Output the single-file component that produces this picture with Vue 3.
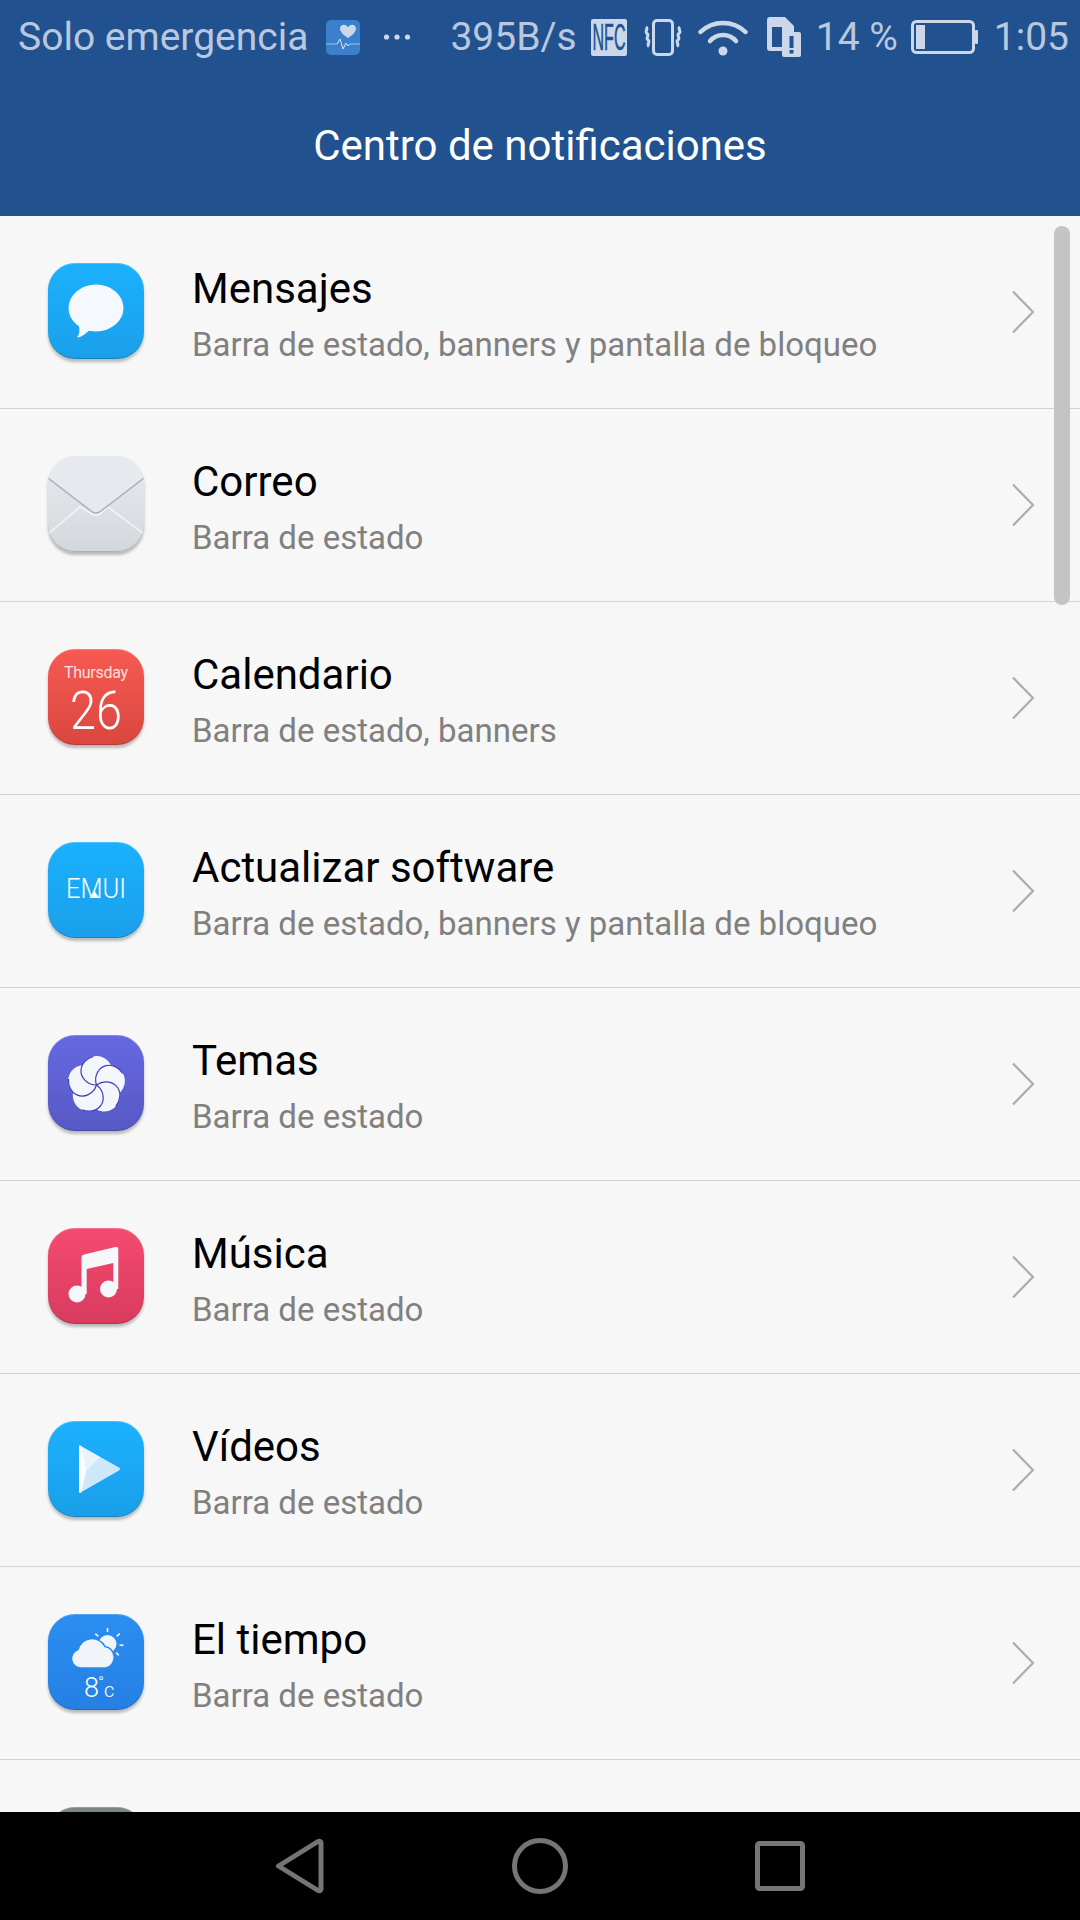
<script setup>
const rows = [
  { key: 'msg', title: 'Mensajes', sub: 'Barra de estado, banners y pantalla de bloqueo' },
  { key: 'mail', title: 'Correo', sub: 'Barra de estado' },
  { key: 'cal', title: 'Calendario', sub: 'Barra de estado, banners' },
  { key: 'emui', title: 'Actualizar software', sub: 'Barra de estado, banners y pantalla de bloqueo' },
  { key: 'theme', title: 'Temas', sub: 'Barra de estado' },
  { key: 'music', title: 'Música', sub: 'Barra de estado' },
  { key: 'video', title: 'Vídeos', sub: 'Barra de estado' },
  { key: 'weather', title: 'El tiempo', sub: 'Barra de estado' },
  { key: 'more', title: '', sub: '' },
]
const angles = [0, 72, 144, 216, 288]
const rays = [-50, 0, 50, 95, 135]
</script>

<template>
  <div class="screen">
    <header class="header">
      <div class="status">
        <span class="st st-carrier">Solo emergencia</span>
        <svg class="s-health" viewBox="0 0 34 35">
          <rect width="34" height="35" rx="5" fill="#3a80cd" />
          <path d="M0 24h11M24 24h10" stroke="#9cbfe4" stroke-width="1.2" />
          <path d="M11 24l3 -5l3 10l3 -6l2 3l2 -2" fill="none" stroke="#dbe5f2" stroke-width="1" />
          <path d="M22 18c-5 -3.500 -8 -6 -8 -9.500c0 -2.500 2 -3.800 3.800 -3.800c1.800 0 3.200 1 4.200 2.500c1 -1.500 2.400 -2.500 4.200 -2.500c1.800 0 3.800 1.300 3.800 3.800c0 3.500 -3 6 -8 9.500z" fill="#ccd8e9" />
        </svg>
        <svg class="s-dots" viewBox="0 0 28 8">
          <circle cx="3.500" cy="4" r="2.600" /><circle cx="14" cy="4" r="2.600" /><circle cx="24.500" cy="4" r="2.600" />
        </svg>
        <span class="st st-speed">395B/s</span>
        <svg class="s-nfc" viewBox="0 0 36 37">
          <rect width="36" height="37" rx="2" fill="#ccd8e9" />
          <text x="18" y="31" text-anchor="middle" textLength="33" lengthAdjust="spacingAndGlyphs" class="nfc-text">NFC</text>
        </svg>
        <svg class="s-vib" viewBox="0 0 40 37">
          <rect x="10.500" y="1.500" width="19" height="34" rx="3.500" fill="none" stroke="#ccd8e9" stroke-width="3" />
          <path d="M3 8c3 2.500 -2 4 1 6.500c3 2.500 -2 4 1 6.500c3 2.500 -2 4 1 6.500M37 8c-3 2.500 2 4 -1 6.500c-3 2.500 2 4 -1 6.500c-3 2.500 2 4 -1 6.500" fill="none" stroke="#ccd8e9" stroke-width="3" />
        </svg>
        <svg class="s-wifi" viewBox="0 0 50 37">
          <path d="M2.500 13C15 1 35 1 47.500 13" fill="none" stroke="#ccd8e9" stroke-width="4.500" stroke-linecap="round" />
          <path d="M12 22C19 14 31 14 38 22" fill="none" stroke="#ccd8e9" stroke-width="4.500" stroke-linecap="round" />
          <circle cx="25" cy="32" r="4.500" fill="#ccd8e9" />
        </svg>
        <svg class="s-sim" viewBox="0 0 34 40">
          <path d="M3 0h15l9 9v8h-12v17h-12a3 3 0 0 1 -3 -3v-28a3 3 0 0 1 3 -3z" fill="#ccd8e9" />
          <rect x="5" y="10" width="10" height="20" fill="#21528f" />
          <rect x="15" y="15" width="19" height="25" rx="2" fill="#ccd8e9" />
          <rect x="22.500" y="19" width="4" height="12" fill="#21528f" />
          <rect x="22.500" y="33" width="4" height="3.500" fill="#21528f" />
        </svg>
        <span class="st st-batt">14 %</span>
        <svg class="s-batt" viewBox="0 0 67 34">
          <rect x="1.500" y="1.500" width="61" height="31" rx="4" fill="none" stroke="#ccd8e9" stroke-width="3" />
          <rect x="5" y="5" width="9" height="24" fill="#ccd8e9" />
          <rect x="64" y="10" width="3" height="14" rx="1" fill="#ccd8e9" />
        </svg>
        <span class="st st-time">1:05</span>
      </div>
      <h1 class="title">Centro de notificaciones</h1>
    </header>

    <main class="list">
      <div v-for="r in rows" :key="r.key" class="row">
        <div class="tile" :class="'tile-' + r.key">
          <svg class="glyph" viewBox="0 0 96 96">
            <template v-if="r.key === 'msg'">
              <ellipse cx="48" cy="45" rx="27.500" ry="23.500" fill="#f5f9fd" />
              <path d="M30 60C32 66 32 71 29 74.500C33 74.500 37 71 42 67z" fill="#f5f9fd" />
            </template>
            <template v-else-if="r.key === 'mail'">
              <path d="M0 78L32 51L44 58Q48 60 52 58L60 51L96 78" fill="none" stroke="#f3f5f7" stroke-width="1.500" />
              <path d="M0 22L43 55Q48 59 53 55L96 22V0H0z" fill="#e6e9ed" />
              <path d="M0 22L43 55Q48 59 53 55L96 22" fill="none" stroke="#aeb2b7" stroke-width="1.500" />
            </template>
            <template v-else-if="r.key === 'cal'">
              <text x="48" y="29" text-anchor="middle" textLength="64" class="t-day">Thursday</text>
              <text x="48" y="80" text-anchor="middle" textLength="52" lengthAdjust="spacingAndGlyphs" class="t-date">26</text>
            </template>
            <template v-else-if="r.key === 'emui'">
              <text x="48" y="56" text-anchor="middle" textLength="60" lengthAdjust="spacingAndGlyphs" class="t-emui">EMUI</text>
              <path d="M41.500 56L46.500 49L51.500 56z" fill="#fff" />
            </template>
            <template v-else-if="r.key === 'theme'">
              <g transform="translate(48.500 50)">
                <circle v-for="a in angles" :key="a" cx="0" cy="-13" r="16" fill="#f3f6fb" :transform="`rotate(${a})`" />
                <path v-for="a in angles" :key="'l' + a" d="M0 0C-10 0 -16 -8 -15.500 -15C-15 -22 -9 -27 -3 -28.500" fill="none" stroke="#3f3db8" stroke-width="1.200" :transform="`rotate(${a})`" />
              </g>
            </template>
            <template v-else-if="r.key === 'music'">
              <circle cx="29" cy="66" r="8.500" fill="#f5f7fb" />
              <circle cx="60.500" cy="61" r="8.500" fill="#f5f7fb" />
              <path d="M33.500 66V29.500Q33.500 27 36 26.500L67.500 19Q70.300 18.500 70.300 21V61H65.300V35L38.700 41V66z" fill="#f5f7fb" />
            </template>
            <template v-else-if="r.key === 'video'">
              <path d="M31 26Q31 23.500 33.500 25.500L71 46.500Q73 48 71 49.500L33.500 71Q31 72.500 31 70z" fill="#cfe8f9" />
              <path d="M31 26Q31 23.500 33.500 25.500L52 36L39 49L33 72Q31 72.500 31 70z" fill="#e8f3fb" />
              <path d="M31 26Q31 24 33 25L38 48L33 71.500Q31 72.500 31 70z" fill="#fbfdff" />
            </template>
            <template v-else-if="r.key === 'weather'">
              <circle cx="59.500" cy="30" r="9" fill="#f1f4f8" />
              <g transform="translate(59.500 30)">
                <path v-for="a in rays" :key="a" d="M0 -12V-16" stroke="#f1f4f8" stroke-width="1.600" :transform="`rotate(${a})`" />
              </g>
              <path d="M33 54a9.500 9.500 0 0 1 -3 -18.500a14.500 14.500 0 0 1 27 -3a11 11 0 0 1 1 21.500z" fill="#f1f4f8" stroke="#2a8aed" stroke-width="1.500" />
              <text x="36" y="83" class="t-temp">8</text>
              <text x="50" y="74" class="t-deg">°</text>
              <text x="56" y="83" class="t-c">c</text>
            </template>
          </svg>
        </div>
        <div class="texts">
          <div class="name">{{ r.title }}</div>
          <div class="desc">{{ r.sub }}</div>
        </div>
        <svg class="chevron" viewBox="0 0 24 44">
          <path d="M2 1.500L22 22L2 42.500" fill="none" stroke="#adadad" stroke-width="2.200" />
        </svg>
      </div>
      <div class="scrollbar"></div>
    </main>

    <nav class="nav">
      <svg class="n-back" viewBox="0 0 50 56">
        <path d="M3.500 28L43 3.500Q46 2.500 46 5V51Q46 53.500 43 52.500z" fill="none" stroke="#757575" stroke-width="5" stroke-linejoin="round" />
      </svg>
      <svg class="n-home" viewBox="0 0 56 56">
        <circle cx="28" cy="28" r="25.500" fill="none" stroke="#757575" stroke-width="5" />
      </svg>
      <svg class="n-recent" viewBox="0 0 50 50">
        <rect x="2.500" y="2.500" width="45" height="45" rx="2" fill="none" stroke="#757575" stroke-width="5" />
      </svg>
    </nav>
  </div>
</template>

<style scoped>
.screen {
  width: 1080px;
  height: 1920px;
  display: flex;
  flex-direction: column;
  background: #f7f7f7;
  font-family: Roboto, "Liberation Sans", sans-serif;
  overflow: hidden;
}
.header {
  height: 216px;
  flex: none;
  background: #21528f;
  display: flex;
  flex-direction: column;
}
.status {
  height: 74px;
  flex: none;
  display: flex;
  align-items: center;
  padding-left: 18px;
}
.status svg { flex: none; display: block; }
.st {
  font-size: 39px;
  color: #b9c8de;
  line-height: 50px;
  white-space: nowrap;
  flex: none;
}
.s-health { width: 34px; height: 35px; margin-left: 18px; }
.s-dots { width: 28px; height: 8px; margin-left: 23px; fill: #ccd8e9; }
.st-speed { margin-left: 39px; }
.s-nfc { width: 36px; height: 37px; margin-left: 14px; }
.nfc-text {
  font-family: "Liberation Sans", sans-serif;
  font-size: 36px;
  fill: #21528f;
  stroke: #21528f;
  stroke-width: .5px;
}
.s-vib { width: 40px; height: 37px; margin-left: 16px; }
.s-wifi { width: 50px; height: 37px; margin-left: 15px; }
.s-sim { width: 34px; height: 40px; margin-left: 19px; }
.st-batt { margin-left: 15px; }
.s-batt { width: 67px; height: 34px; margin-left: 13px; }
.st-time { margin-left: 16px; }
.title {
  flex: 1;
  margin: 0;
  font-size: 42px;
  font-weight: 400;
  color: #fff;
  display: flex;
  align-items: center;
  justify-content: center;
}
.list {
  flex: 1;
  min-height: 0;
  overflow: hidden;
  position: relative;
}
.row {
  height: 193px;
  box-sizing: border-box;
  border-bottom: 1px solid #d2d2d2;
  display: flex;
  align-items: flex-start;
  padding: 47px 0 0 48px;
}
.tile {
  width: 96px;
  height: 96px;
  flex: none;
  border-radius: 27px;
  box-shadow: 0 3px 3px rgba(0, 0, 0, .25), inset 0 -1px 0 rgba(0, 0, 0, .18), inset 0 1px 0 rgba(255, 255, 255, .2);
  overflow: hidden;
}
.glyph { width: 96px; height: 96px; display: block; }
.tile-msg { background: linear-gradient(#1cb1fd, #1a9fea); }
.tile-mail { background: linear-gradient(#e8ebee, #d3d8dd); }
.tile-cal { background: linear-gradient(#f65a52, #d9473f); }
.tile-emui { background: linear-gradient(#1ab1fd, #1a9fea); }
.tile-theme { background: linear-gradient(#6668e2, #5759c5); }
.tile-music { background: linear-gradient(#f54b70, #d83b5e); }
.tile-video { background: linear-gradient(#1cb1fd, #1a9fea); }
.tile-weather { background: linear-gradient(#2a8ef0, #2580e4); }
.tile-more { background: #7d8486; }
.t-day {
  font-family: Roboto, sans-serif;
  font-size: 16px;
  font-weight: 400;
  fill: #fbe0de;
}
.t-date {
  font-family: Roboto, sans-serif;
  font-size: 53px;
  font-weight: 300;
  fill: #fff;
}
.t-emui {
  font-family: Roboto, sans-serif;
  font-size: 27px;
  font-weight: 300;
  fill: #fff;
}
.t-temp {
  font-family: Roboto, sans-serif;
  font-size: 27px;
  font-weight: 300;
  fill: #fff;
}
.t-deg {
  font-family: Roboto, sans-serif;
  font-size: 16px;
  font-weight: 300;
  fill: #fff;
}
.t-c {
  font-family: Roboto, sans-serif;
  font-size: 20px;
  font-weight: 300;
  fill: #fff;
}
.texts {
  margin-left: 48px;
  flex: 1;
  min-width: 0;
}
.name {
  font-size: 42px;
  line-height: 47px;
  height: 47px;
  margin-top: 2px;
  color: #000;
}
.desc {
  font-size: 33px;
  line-height: 40px;
  height: 40px;
  margin-top: 13px;
  color: #808080;
}
.chevron {
  width: 24px;
  height: 44px;
  flex: none;
  margin: 27px 45px 0 0;
}
.scrollbar {
  position: absolute;
  top: 10px;
  left: 1054px;
  width: 16px;
  height: 379px;
  border-radius: 8px;
  background: #c4c4c4;
}
.nav {
  height: 108px;
  flex: none;
  background: #000;
  display: flex;
  align-items: center;
  padding-left: 275px;
}
.nav svg { display: block; flex: none; }
.n-back { width: 50px; height: 56px; }
.n-home { width: 56px; height: 56px; margin-left: 187px; }
.n-recent { width: 50px; height: 50px; margin-left: 187px; }
</style>
